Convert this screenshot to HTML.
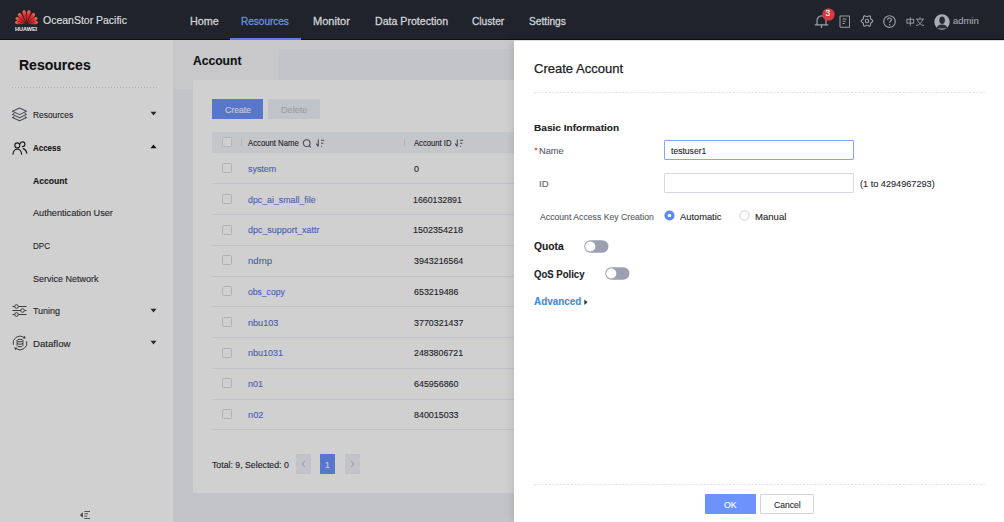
<!DOCTYPE html>
<html><head><meta charset="utf-8">
<style>
*{margin:0;padding:0;box-sizing:border-box}
html,body{width:1004px;height:522px;overflow:hidden;background:#fff;font-family:"Liberation Sans",sans-serif}
.t{position:absolute;white-space:nowrap;transform-origin:0 0;-webkit-text-stroke:0.12px currentColor}
.bl{display:inline-block;width:0;height:0;vertical-align:baseline}
.r{position:absolute;display:block}
#page{position:absolute;left:0;top:0;width:1004px;height:522px}
#mask{position:absolute;left:0;top:40px;width:1004px;height:482px;background:rgba(0,0,0,0.185)}
#drawer{position:absolute;left:514px;top:40px;width:490px;height:482px;background:#fff;box-shadow:-2px 0 8px rgba(0,0,0,0.10)}
#drawer .t,#drawer .r{margin-left:-514px;margin-top:-40px}
</style></head><body>
<div id="page">
<div class="r" style="left:0px;top:40px;width:173px;height:482px;background:#fff"></div>
<div class="r" style="left:173px;top:40px;width:831px;height:482px;background:#f0f1f7"></div>
<div class="r" style="left:173px;top:40px;width:831px;height:9px;background:#f5f5f8"></div>
<div class="r" style="left:173px;top:40px;width:105px;height:49px;background:#f5f5f8"></div>
<div class="r" style="left:193px;top:80px;width:811px;height:413px;background:#fff"></div>
<div class="t" style="left:19.30px;top:58.05px;font-size:14.50px;line-height:14.50px;transform:scaleX(0.9666);letter-spacing:0.000px;color:#141417;font-weight:bold;">Resources</div>
<div class="r" style="left:11.5px;top:87px;width:147px;height:1px;background-image:linear-gradient(to right,#d4d5da 50%,transparent 50%);background-size:3px 1px"></div>
<div class="t" style="left:32.99px;top:110.06px;font-size:9.40px;line-height:9.40px;transform:scaleX(0.8942);letter-spacing:0.000px;color:#2e2e32;">Resources</div>
<div class="t" style="left:33.11px;top:143.05px;font-size:9.40px;line-height:9.40px;transform:scaleX(0.8480);letter-spacing:0.000px;color:#1d1d21;font-weight:bold;">Access</div>
<div class="t" style="left:33.09px;top:176.05px;font-size:9.40px;line-height:9.40px;transform:scaleX(0.9127);letter-spacing:0.000px;color:#1d1d21;font-weight:bold;">Account</div>
<div class="t" style="left:33.31px;top:208.06px;font-size:9.40px;line-height:9.40px;transform:scaleX(0.9761);letter-spacing:0.000px;color:#2e2e32;">Authentication User</div>
<div class="t" style="left:33.12px;top:241.06px;font-size:9.40px;line-height:9.40px;transform:scaleX(0.8600);letter-spacing:0.000px;color:#2e2e32;">DPC</div>
<div class="t" style="left:33.39px;top:274.06px;font-size:9.40px;line-height:9.40px;transform:scaleX(0.9580);letter-spacing:0.000px;color:#2e2e32;">Service Network</div>
<div class="t" style="left:33.12px;top:306.05px;font-size:9.40px;line-height:9.40px;transform:scaleX(0.9505);letter-spacing:0.000px;color:#2e2e32;">Tuning</div>
<div class="t" style="left:32.56px;top:339.05px;font-size:9.40px;line-height:9.40px;transform:scaleX(1.0265);letter-spacing:0.000px;color:#2e2e32;">Dataflow</div>
<svg class="r" style="left:149.5px;top:111.4px" width="7" height="5" viewBox="0 0 7 5"><path d="M0.5 0.8 L3.5 4.4 L6.5 0.8Z" fill="#333"/></svg>
<svg class="r" style="left:149.5px;top:144.1px" width="7" height="5" viewBox="0 0 7 5"><path d="M0.5 4.2 L3.5 0.6 L6.5 4.2Z" fill="#111"/></svg>
<svg class="r" style="left:149.5px;top:307.59999999999997px" width="7" height="5" viewBox="0 0 7 5"><path d="M0.5 0.8 L3.5 4.4 L6.5 0.8Z" fill="#333"/></svg>
<svg class="r" style="left:149.5px;top:340.3px" width="7" height="5" viewBox="0 0 7 5"><path d="M0.5 0.8 L3.5 4.4 L6.5 0.8Z" fill="#333"/></svg>
<svg class="r" style="left:12px;top:107px" width="16" height="15" viewBox="0 0 16 15"><g fill="none" stroke="#595e6b" stroke-width="1.05" stroke-linejoin="round"><path d="M7.5 1 L14.5 4.3 L7.5 7.6 L0.5 4.3Z"/><path d="M2.3 6.5 L0.5 7.4 L7.5 10.7 L14.5 7.4 L12.7 6.5"/><path d="M2.3 9.6 L0.5 10.5 L7.5 13.8 L14.5 10.5 L12.7 9.6"/></g></svg>
<svg class="r" style="left:11.5px;top:140.5px" width="16" height="14" viewBox="0 0 16 14"><g fill="none" stroke="#202024" stroke-width="1.15" stroke-linecap="round"><circle cx="5.3" cy="4.4" r="2.5"/><path d="M8.2 2.6 C8.5 1.5 9.5 0.8 10.5 0.8 C11.9 0.8 12.9 1.9 12.9 3.2 C12.9 4.6 11.9 5.6 10.5 5.6"/><path d="M1 13.2 C1.3 9.7 3.2 8.2 5.3 8.2 C7.4 8.2 9.3 9.7 9.6 13.2"/><path d="M11.2 7.6 C13.2 8.2 14.4 9.8 14.8 12.2"/></g></svg>
<svg class="r" style="left:12px;top:303px" width="15" height="14" viewBox="0 0 15 14"><g fill="none" stroke="#4a4a4e" stroke-width="1"><path d="M0.5 3.5H2.6M6.4 3.5H14.5M0.5 7.5H8.6M12.4 7.5H14.5M0.5 11.5H2.6M6.4 11.5H14.5"/><circle cx="4.5" cy="3.5" r="1.8"/><circle cx="10.5" cy="7.5" r="1.8"/><circle cx="4.5" cy="11.5" r="1.8"/></g></svg>
<svg class="r" style="left:11.5px;top:334.6px" width="16" height="16" viewBox="0 0 16 16"><g fill="none" stroke="#4a4a4e" stroke-width="1"><path d="M1.34 9.79 A6.9 6.9 0 0 1 11.96 2.35 M14.66 6.21 A6.9 6.9 0 0 1 4.04 13.65"/><ellipse cx="8" cy="5.6" rx="2.9" ry="1.3"/><path d="M5.1 5.6V10.6C5.1 12.2 10.9 12.2 10.9 10.6V5.6M5.1 8.1C5.1 9.6 10.9 9.6 10.9 8.1"/></g><path d="M13.76 3.61 L12.63 0.87 L10.79 3.49 Z M2.24 12.39 L3.37 15.13 L5.21 12.51 Z" fill="#4a4a4e"/></svg>
<svg class="r" style="left:79px;top:510px" width="12" height="10" viewBox="0 0 12 10"><path d="M0.9 4.9 L3.9 2.2 L3.9 7.7Z" fill="#4f5360"/><path d="M5.3 1.5H11M5.3 3.8H9M5.3 6.2H8.2M5.3 8.5H11" stroke="#4f5360" stroke-width="0.9"/></svg>
<div class="t" style="left:192.70px;top:55.06px;font-size:12.60px;line-height:12.60px;transform:scaleX(0.9612);letter-spacing:0.000px;color:#141417;font-weight:bold;">Account</div>
<div class="r" style="left:212px;top:99px;width:51px;height:20px;background:#6c92fb"></div>
<div class="t" style="left:224.67px;top:106.06px;font-size:9.20px;line-height:9.20px;transform:scaleX(0.9431);letter-spacing:0.000px;color:#f4f7ff;">Create</div>
<div class="r" style="left:268px;top:99px;width:52px;height:20px;background:#eceff7"></div>
<div class="t" style="left:281.13px;top:106.06px;font-size:9.20px;line-height:9.20px;transform:scaleX(0.9902);letter-spacing:0.000px;color:#c2c5cc;">Delete</div>
<div class="r" style="left:212px;top:132px;width:302px;height:21px;background:#f1f3f8"></div>
<div class="r" style="left:222px;top:137px;width:10px;height:10px;background:#fff;border:1px solid #dcdde0;border-radius:1.5px"></div>
<div class="r" style="left:241px;top:139px;width:1px;height:7px;background:#dcdee5"></div>
<div class="t" style="left:248.12px;top:139.05px;font-size:8.40px;line-height:8.40px;transform:scaleX(0.9244);letter-spacing:0.000px;color:#2a2a30;">Account Name</div>
<svg class="r" style="left:302px;top:139px" width="10" height="10" viewBox="0 0 10 10"><g fill="none" stroke="#5a5e6a" stroke-width="1.05"><circle cx="4.7" cy="4.1" r="3.4"/><path d="M7.2 6.6 L9 8.5"/></g></svg>
<svg class="r" style="left:314.5px;top:139px" width="10" height="9" viewBox="0 0 10 9"><g fill="none" stroke="#5a5e6a" stroke-width="1.1"><path d="M3.3 0.5V7.6M1.2 4.6L3.3 7.4"/><path d="M6 1.2H9.2M6 4.3H8.4M6 7.3H7.1"/></g></svg>
<div class="r" style="left:404px;top:139px;width:1px;height:7px;background:#dcdee5"></div>
<div class="t" style="left:413.92px;top:139.05px;font-size:8.40px;line-height:8.40px;transform:scaleX(0.9154);letter-spacing:0.000px;color:#2a2a30;">Account ID</div>
<svg class="r" style="left:453.6px;top:139px" width="10" height="9" viewBox="0 0 10 9"><g fill="none" stroke="#5a5e6a" stroke-width="1.1"><path d="M3.3 0.5V7.6M1.2 4.6L3.3 7.4"/><path d="M6 1.2H9.2M6 4.3H8.4M6 7.3H7.1"/></g></svg>
<div class="r" style="left:222px;top:163.0px;width:10px;height:10px;background:#fff;border:1px solid #d9dadd;border-radius:1.5px"></div>
<div class="t" style="left:248.26px;top:164.06px;font-size:9.70px;line-height:9.70px;transform:scaleX(0.9190);letter-spacing:0.000px;color:#5675dc;">system</div>
<div class="t" style="left:413.97px;top:164.06px;font-size:9.70px;line-height:9.70px;transform:scaleX(0.9186);letter-spacing:0.000px;color:#2a2a30;">0</div>
<div class="r" style="left:212px;top:183.4px;width:302px;height:1px;background:#eceef4"></div>
<div class="r" style="left:222px;top:193.8px;width:10px;height:10px;background:#fff;border:1px solid #d9dadd;border-radius:1.5px"></div>
<div class="t" style="left:248.14px;top:195.06px;font-size:9.70px;line-height:9.70px;transform:scaleX(0.9091);letter-spacing:0.000px;color:#5675dc;">dpc_ai_small_file</div>
<div class="t" style="left:413.30px;top:195.06px;font-size:9.70px;line-height:9.70px;transform:scaleX(0.9068);letter-spacing:0.000px;color:#2a2a30;">1660132891</div>
<div class="r" style="left:212px;top:214.2px;width:302px;height:1px;background:#eceef4"></div>
<div class="r" style="left:222px;top:224.5px;width:10px;height:10px;background:#fff;border:1px solid #d9dadd;border-radius:1.5px"></div>
<div class="t" style="left:248.14px;top:225.06px;font-size:9.70px;line-height:9.70px;transform:scaleX(0.9216);letter-spacing:0.000px;color:#5675dc;">dpc_support_xattr</div>
<div class="t" style="left:413.28px;top:225.06px;font-size:9.70px;line-height:9.70px;transform:scaleX(0.9261);letter-spacing:0.000px;color:#2a2a30;">1502354218</div>
<div class="r" style="left:212px;top:244.9px;width:302px;height:1px;background:#eceef4"></div>
<div class="r" style="left:222px;top:255.2px;width:10px;height:10px;background:#fff;border:1px solid #d9dadd;border-radius:1.5px"></div>
<div class="t" style="left:247.96px;top:256.06px;font-size:9.70px;line-height:9.70px;transform:scaleX(0.9890);letter-spacing:0.000px;color:#5675dc;">ndmp</div>
<div class="t" style="left:413.97px;top:256.06px;font-size:9.70px;line-height:9.70px;transform:scaleX(0.9147);letter-spacing:0.000px;color:#2a2a30;">3943216564</div>
<div class="r" style="left:212px;top:275.6px;width:302px;height:1px;background:#eceef4"></div>
<div class="r" style="left:222px;top:286.0px;width:10px;height:10px;background:#fff;border:1px solid #d9dadd;border-radius:1.5px"></div>
<div class="t" style="left:248.15px;top:287.06px;font-size:9.70px;line-height:9.70px;transform:scaleX(0.8863);letter-spacing:0.000px;color:#5675dc;">obs_copy</div>
<div class="t" style="left:413.86px;top:287.06px;font-size:9.70px;line-height:9.70px;transform:scaleX(0.9172);letter-spacing:0.000px;color:#2a2a30;">653219486</div>
<div class="r" style="left:212px;top:306.4px;width:302px;height:1px;background:#eceef4"></div>
<div class="r" style="left:222px;top:316.8px;width:10px;height:10px;background:#fff;border:1px solid #d9dadd;border-radius:1.5px"></div>
<div class="t" style="left:248.40px;top:318.06px;font-size:9.70px;line-height:9.70px;transform:scaleX(0.9390);letter-spacing:0.000px;color:#5675dc;">nbu103</div>
<div class="t" style="left:413.97px;top:318.06px;font-size:9.70px;line-height:9.70px;transform:scaleX(0.9166);letter-spacing:0.000px;color:#2a2a30;">3770321437</div>
<div class="r" style="left:212px;top:337.1px;width:302px;height:1px;background:#eceef4"></div>
<div class="r" style="left:222px;top:347.5px;width:10px;height:10px;background:#fff;border:1px solid #d9dadd;border-radius:1.5px"></div>
<div class="t" style="left:248.41px;top:348.06px;font-size:9.70px;line-height:9.70px;transform:scaleX(0.9266);letter-spacing:0.000px;color:#5675dc;">nbu1031</div>
<div class="t" style="left:413.86px;top:348.06px;font-size:9.70px;line-height:9.70px;transform:scaleX(0.9104);letter-spacing:0.000px;color:#2a2a30;">2483806721</div>
<div class="r" style="left:212px;top:367.9px;width:302px;height:1px;background:#eceef4"></div>
<div class="r" style="left:222px;top:378.2px;width:10px;height:10px;background:#fff;border:1px solid #d9dadd;border-radius:1.5px"></div>
<div class="t" style="left:248.35px;top:379.06px;font-size:9.70px;line-height:9.70px;transform:scaleX(0.9308);letter-spacing:0.000px;color:#5675dc;">n01</div>
<div class="t" style="left:413.86px;top:379.06px;font-size:9.70px;line-height:9.70px;transform:scaleX(0.9174);letter-spacing:0.000px;color:#2a2a30;">645956860</div>
<div class="r" style="left:212px;top:398.6px;width:302px;height:1px;background:#eceef4"></div>
<div class="r" style="left:222px;top:409.0px;width:10px;height:10px;background:#fff;border:1px solid #d9dadd;border-radius:1.5px"></div>
<div class="t" style="left:248.34px;top:410.06px;font-size:9.70px;line-height:9.70px;transform:scaleX(0.9540);letter-spacing:0.000px;color:#5675dc;">n02</div>
<div class="t" style="left:413.92px;top:410.06px;font-size:9.70px;line-height:9.70px;transform:scaleX(0.9192);letter-spacing:0.000px;color:#2a2a30;">840015033</div>
<div class="r" style="left:212px;top:429.4px;width:302px;height:1px;background:#eceef4"></div>
<div class="t" style="left:212.22px;top:461.06px;font-size:9.30px;line-height:9.30px;transform:scaleX(0.9403);letter-spacing:0.000px;color:#2a2a30;">Total: 9, Selected: 0</div>
<div class="r" style="left:296px;top:454px;width:15px;height:20px;background:#eef0f6"></div>
<svg class="r" style="left:301px;top:460px" width="5" height="8" viewBox="0 0 5 8"><path d="M4 0.8L1 4L4 7.2" fill="none" stroke="#b9bcc4" stroke-width="1"/></svg>
<div class="r" style="left:320px;top:454px;width:15px;height:20px;background:#6c92fb"></div>
<div class="t" style="left:324.53px;top:461.06px;font-size:9.30px;line-height:9.30px;transform:scaleX(0.9253);letter-spacing:0.000px;color:#fff;">1</div>
<div class="r" style="left:345px;top:454px;width:15px;height:20px;background:#eef0f6"></div>
<svg class="r" style="left:350px;top:460px" width="5" height="8" viewBox="0 0 5 8"><path d="M1 0.8L4 4L1 7.2" fill="none" stroke="#b9bcc4" stroke-width="1"/></svg>
</div>
<div id="mask"></div>
<div class="r" style="left:0px;top:0px;width:1004px;height:40px;background:#20232b"></div>
<div class="r" style="left:0px;top:39px;width:1004px;height:1px;background:#0e0f13"></div>
<svg class="r" style="left:14px;top:7px" width="25" height="18" viewBox="0 0 25 18"><defs><linearGradient id="pg" x1="0" y1="1" x2="0" y2="0"><stop offset="0" stop-color="#c8151c"/><stop offset="0.6" stop-color="#d92a2a"/><stop offset="1" stop-color="#e8745e"/></linearGradient></defs><g fill="url(#pg)"><path transform="translate(12.5 17.3) rotate(-11) translate(0 -1.3)" d="M0 0 C-0.53 -4.55 -1.75 -7.15 -1.75 -10.40 C-1.75 -12.61 -0.79 -13.00 0 -13.00 C0.79 -13.00 1.75 -12.61 1.75 -10.40 C1.75 -7.15 0.53 -4.55 0 0Z"/><path transform="translate(12.5 17.3) rotate(11) translate(0 -1.3)" d="M0 0 C-0.53 -4.55 -1.75 -7.15 -1.75 -10.40 C-1.75 -12.61 -0.79 -13.00 0 -13.00 C0.79 -13.00 1.75 -12.61 1.75 -10.40 C1.75 -7.15 0.53 -4.55 0 0Z"/><path transform="translate(12.5 17.3) rotate(-36) translate(0 -1.3)" d="M0 0 C-0.53 -4.27 -1.75 -6.71 -1.75 -9.76 C-1.75 -11.83 -0.79 -12.20 0 -12.20 C0.79 -12.20 1.75 -11.83 1.75 -9.76 C1.75 -6.71 0.53 -4.27 0 0Z"/><path transform="translate(12.5 17.3) rotate(36) translate(0 -1.3)" d="M0 0 C-0.53 -4.27 -1.75 -6.71 -1.75 -9.76 C-1.75 -11.83 -0.79 -12.20 0 -12.20 C0.79 -12.20 1.75 -11.83 1.75 -9.76 C1.75 -6.71 0.53 -4.27 0 0Z"/><path transform="translate(12.5 17.3) rotate(-59) translate(0 -1.3)" d="M0 0 C-0.49 -3.92 -1.65 -6.16 -1.65 -8.96 C-1.65 -10.86 -0.74 -11.20 0 -11.20 C0.74 -11.20 1.65 -10.86 1.65 -8.96 C1.65 -6.16 0.49 -3.92 0 0Z"/><path transform="translate(12.5 17.3) rotate(59) translate(0 -1.3)" d="M0 0 C-0.49 -3.92 -1.65 -6.16 -1.65 -8.96 C-1.65 -10.86 -0.74 -11.20 0 -11.20 C0.74 -11.20 1.65 -10.86 1.65 -8.96 C1.65 -6.16 0.49 -3.92 0 0Z"/><path transform="translate(12.5 17.3) rotate(-80) translate(0 -1.3)" d="M0 0 C-0.46 -3.57 -1.55 -5.61 -1.55 -8.16 C-1.55 -9.89 -0.70 -10.20 0 -10.20 C0.70 -10.20 1.55 -9.89 1.55 -8.16 C1.55 -5.61 0.46 -3.57 0 0Z"/><path transform="translate(12.5 17.3) rotate(80) translate(0 -1.3)" d="M0 0 C-0.46 -3.57 -1.55 -5.61 -1.55 -8.16 C-1.55 -9.89 -0.70 -10.20 0 -10.20 C0.70 -10.20 1.55 -9.89 1.55 -8.16 C1.55 -5.61 0.46 -3.57 0 0Z"/></g></svg>
<div class="t" style="left:15.06px;top:27.05px;font-size:5.00px;line-height:5.00px;transform:scaleX(1.1080);letter-spacing:0.000px;color:#dcdcde;font-weight:bold;">HUAWEI</div>
<div class="t" style="left:42.71px;top:15.05px;font-size:10.90px;line-height:10.90px;transform:scaleX(0.9627);letter-spacing:0.000px;color:#d8dadf;-webkit-text-stroke:0.2px currentColor;">OceanStor Pacific</div>
<div class="t" style="left:189.59px;top:16.05px;font-size:10.80px;line-height:10.80px;transform:scaleX(1.0007);letter-spacing:0.000px;color:#cfd2d8;-webkit-text-stroke:0.3px currentColor;">Home</div>
<div class="t" style="left:241.44px;top:16.05px;font-size:10.80px;line-height:10.80px;transform:scaleX(0.9274);letter-spacing:0.000px;color:#6d8fe6;-webkit-text-stroke:0.3px currentColor;">Resources</div>
<div class="t" style="left:312.62px;top:16.05px;font-size:10.80px;line-height:10.80px;transform:scaleX(1.0247);letter-spacing:0.000px;color:#cfd2d8;-webkit-text-stroke:0.3px currentColor;">Monitor</div>
<div class="t" style="left:374.82px;top:16.05px;font-size:10.80px;line-height:10.80px;transform:scaleX(0.9813);letter-spacing:0.000px;color:#cfd2d8;-webkit-text-stroke:0.3px currentColor;">Data Protection</div>
<div class="t" style="left:471.89px;top:16.05px;font-size:10.80px;line-height:10.80px;transform:scaleX(0.9422);letter-spacing:0.000px;color:#cfd2d8;-webkit-text-stroke:0.3px currentColor;">Cluster</div>
<div class="t" style="left:528.94px;top:16.05px;font-size:10.80px;line-height:10.80px;transform:scaleX(0.9444);letter-spacing:0.000px;color:#cfd2d8;-webkit-text-stroke:0.3px currentColor;">Settings</div>
<div class="r" style="left:230px;top:38px;width:70.5px;height:2px;background:#5c82e0"></div>
<svg class="r" style="left:814px;top:14px" width="16" height="15" viewBox="0 0 16 15"><g fill="none" stroke="#9a9ea7" stroke-width="1.2" stroke-linecap="round"><path d="M3 10.8 V6.8 C3 4 5 1.8 7.5 1.8 C10 1.8 12 4 12 6.8 V10.8"/><path d="M1.2 10.8H13.8"/><path d="M7.5 11V13.5"/></g></svg>
<svg class="r" style="left:821.5px;top:8px" width="13" height="13" viewBox="0 0 13 13"><circle cx="6.5" cy="6.5" r="6.2" fill="#d63a3c"/></svg>
<div class="t" style="left:825.4px;top:8.9px;font-size:8.4px;line-height:9px;color:#fff">3</div>
<svg class="r" style="left:838.5px;top:15px" width="11.5" height="13" viewBox="0 0 11.5 13"><g fill="none" stroke="#9a9ea7" stroke-width="1.05"><rect x="1" y="0.9" width="9.6" height="11.3" rx="0.6"/><path d="M3.6 4H7.4M3.6 6.2H6.6M3.6 8.4H5.8"/></g></svg>
<svg class="r" style="left:859.8px;top:14.2px" width="14" height="14" viewBox="0 0 14 14"><g fill="none" stroke="#9a9ea7" stroke-width="1.1"><path d="M12.75 7.00 L12.68 7.37 L12.48 7.72 L12.19 8.03 L11.83 8.29 L11.46 8.51 L11.13 8.71 L10.86 8.90 L10.68 9.12 L10.58 9.39 L10.55 9.72 L10.54 10.11 L10.54 10.54 L10.49 10.97 L10.37 11.39 L10.16 11.73 L9.88 11.98 L9.52 12.11 L9.12 12.11 L8.70 12.01 L8.29 11.83 L7.92 11.62 L7.58 11.43 L7.28 11.30 L7.00 11.25 L6.72 11.30 L6.42 11.43 L6.08 11.62 L5.71 11.83 L5.30 12.01 L4.88 12.11 L4.48 12.11 L4.13 11.98 L3.84 11.73 L3.63 11.39 L3.51 10.97 L3.46 10.54 L3.46 10.11 L3.45 9.72 L3.42 9.39 L3.32 9.12 L3.14 8.90 L2.87 8.71 L2.54 8.51 L2.17 8.29 L1.81 8.03 L1.52 7.72 L1.32 7.37 L1.25 7.00 L1.32 6.63 L1.52 6.28 L1.81 5.97 L2.17 5.71 L2.54 5.49 L2.87 5.29 L3.14 5.10 L3.32 4.88 L3.42 4.61 L3.45 4.28 L3.46 3.89 L3.46 3.46 L3.51 3.03 L3.63 2.61 L3.84 2.27 L4.12 2.02 L4.48 1.89 L4.88 1.89 L5.30 1.99 L5.71 2.17 L6.08 2.38 L6.42 2.57 L6.72 2.70 L7.00 2.75 L7.28 2.70 L7.58 2.57 L7.92 2.38 L8.29 2.17 L8.70 1.99 L9.12 1.89 L9.52 1.89 L9.88 2.02 L10.16 2.27 L10.37 2.61 L10.49 3.03 L10.54 3.46 L10.54 3.89 L10.55 4.28 L10.58 4.61 L10.68 4.87 L10.86 5.10 L11.13 5.29 L11.46 5.49 L11.83 5.71 L12.19 5.97 L12.48 6.28 L12.68 6.63Z" stroke-linejoin="round"/><circle cx="7" cy="7" r="1.7"/></g></svg>
<svg class="r" style="left:883px;top:15px" width="13" height="13" viewBox="0 0 13 13"><g fill="none" stroke="#9a9ea7" stroke-width="1.15"><circle cx="6.5" cy="6.5" r="5.8"/><path d="M4.6 5 C4.6 3.7 5.5 3 6.5 3 C7.6 3 8.4 3.8 8.4 4.8 C8.4 6.2 6.6 6.3 6.6 7.8"/></g><circle cx="6.6" cy="9.8" r="0.75" fill="#9a9ea7"/></svg>
<svg class="r" style="left:906px;top:17px" width="18.5" height="9" viewBox="0 0 18.5 9"><g fill="none" stroke="#9a9ea7" stroke-width="0.95"><rect x="0.9" y="2.3" width="6.8" height="3.8"/><path d="M4.3 0.3V8.8"/><path d="M14 0.2V1.8M10 2.1H18M11.3 2.3C12.2 5.5 14.3 7.8 18 8.7M16.7 2.3C15.8 5.5 13.7 7.8 10 8.7"/></g></svg>
<svg class="r" style="left:933.5px;top:13.5px" width="16" height="16" viewBox="0 0 16 16"><defs><clipPath id="cav"><circle cx="8" cy="8" r="7.7"/></clipPath></defs><circle cx="8" cy="8" r="7.7" fill="#a9adb6"/><g clip-path="url(#cav)" fill="#2a2d35"><ellipse cx="8.1" cy="6.3" rx="2.8" ry="3.8"/><path d="M2.5 14.5 C3 11.6 5 10.4 8 10.4 C11 10.4 13 11.6 13.5 14.5Z"/></g></svg>
<div class="t" style="left:952.70px;top:16.05px;font-size:9.50px;line-height:9.50px;transform:scaleX(0.9932);letter-spacing:0.000px;color:#a3a7b0;">admin</div>
<div id="drawer">
<div class="r" style="left:514px;top:40px;width:490px;height:1px;background:#dedee0"></div>
<div class="t" style="left:534.34px;top:63.06px;font-size:12.60px;line-height:12.60px;transform:scaleX(1.0346);letter-spacing:0.000px;color:#222226;-webkit-text-stroke:0.25px currentColor;">Create Account</div>
<div class="r" style="left:534px;top:92px;width:451px;height:1px;background-image:linear-gradient(to right,#dcdde4 50%,transparent 50%);background-size:3.7px 1px"></div>
<div class="t" style="left:533.91px;top:123.05px;font-size:9.70px;line-height:9.70px;transform:scaleX(1.0405);letter-spacing:0.000px;color:#222226;font-weight:bold;">Basic Information</div>
<svg class="r" style="left:533.8px;top:147px" width="4" height="4" viewBox="0 0 4 4"><path d="M2 0.2 L2.5 1.4 L3.8 1.4 L2.8 2.2 L3.2 3.6 L2 2.8 L0.8 3.6 L1.2 2.2 L0.2 1.4 L1.5 1.4Z" fill="#e53935"/></svg>
<div class="t" style="left:539.45px;top:147.06px;font-size:9.00px;line-height:9.00px;transform:scaleX(1.0300);letter-spacing:0.000px;color:#5a5d64;">Name</div>
<div class="r" style="left:664px;top:140px;width:189.5px;height:20px;background:#fff;border:1px solid #85a5f8;border-radius:1px"></div>
<div class="t" style="left:671.19px;top:147.05px;font-size:9.00px;line-height:9.00px;transform:scaleX(0.9527);letter-spacing:0.000px;color:#1f1f23;">testuser1</div>
<div class="t" style="left:539.14px;top:180.06px;font-size:9.00px;line-height:9.00px;transform:scaleX(1.0591);letter-spacing:0.000px;color:#5a5d64;">ID</div>
<div class="r" style="left:664px;top:173px;width:189.5px;height:20px;background:#fff;border:1px solid #d7d9df;border-radius:1px"></div>
<div class="t" style="left:859.63px;top:180.06px;font-size:9.20px;line-height:9.20px;transform:scaleX(0.9949);letter-spacing:0.000px;color:#2a2a30;">(1 to 4294967293)</div>
<div class="t" style="left:540.01px;top:213.05px;font-size:9.10px;line-height:9.10px;transform:scaleX(0.9545);letter-spacing:0.000px;color:#5a5d64;">Account Access Key Creation</div>
<svg class="r" style="left:663.8px;top:210.2px" width="11" height="11" viewBox="0 0 11 11"><circle cx="5.5" cy="5.5" r="5.1" fill="#5a88f7"/><circle cx="5.5" cy="5.5" r="1.8" fill="#fff"/></svg>
<div class="t" style="left:679.91px;top:213.06px;font-size:9.20px;line-height:9.20px;transform:scaleX(1.0138);letter-spacing:0.000px;color:#2a2a30;">Automatic</div>
<svg class="r" style="left:739px;top:210.2px" width="11" height="11" viewBox="0 0 11 11"><circle cx="5.5" cy="5.5" r="4.7" fill="#fff" stroke="#cdd0d6" stroke-width="1"/></svg>
<div class="t" style="left:754.74px;top:213.06px;font-size:9.20px;line-height:9.20px;transform:scaleX(1.0407);letter-spacing:0.000px;color:#2a2a30;">Manual</div>
<div class="t" style="left:534.18px;top:242.06px;font-size:10.20px;line-height:10.20px;transform:scaleX(1.0092);letter-spacing:0.000px;color:#222226;font-weight:bold;">Quota</div>
<svg class="r" style="left:584px;top:239.5px" width="25" height="13" viewBox="0 0 25 13"><rect x="0.3" y="0.3" width="24.2" height="12.4" rx="6.2" fill="#9ca1b2"/><circle cx="6.3" cy="6.5" r="5.1" fill="#fff"/></svg>
<div class="t" style="left:534.22px;top:270.06px;font-size:10.20px;line-height:10.20px;transform:scaleX(0.9383);letter-spacing:0.000px;color:#222226;font-weight:bold;">QoS Policy</div>
<svg class="r" style="left:604.8px;top:267.2px" width="25" height="13" viewBox="0 0 25 13"><rect x="0.3" y="0.3" width="24.2" height="12.4" rx="6.2" fill="#9ca1b2"/><circle cx="6.3" cy="6.5" r="5.1" fill="#fff"/></svg>
<div class="t" style="left:534.36px;top:297.06px;font-size:10.20px;line-height:10.20px;transform:scaleX(0.9689);letter-spacing:0.000px;color:#3a8ee6;font-weight:bold;">Advanced</div>
<svg class="r" style="left:584px;top:299px" width="4" height="7" viewBox="0 0 4 7"><path d="M0.3 0.5L3.6 3.3L0.3 6.1Z" fill="#333"/></svg>
<div class="r" style="left:534px;top:483.5px;width:451px;height:1px;background-image:linear-gradient(to right,#dcdde4 50%,transparent 50%);background-size:3.7px 1px"></div>
<div class="r" style="left:705px;top:494px;width:50.5px;height:20px;background:#6c92fb;border-radius:1px"></div>
<div class="t" style="left:724.00px;top:501.05px;font-size:9.10px;line-height:9.10px;transform:scaleX(0.9581);letter-spacing:0.000px;color:#fff;">OK</div>
<div class="r" style="left:760px;top:494px;width:53.5px;height:20px;background:#fff;border:1px solid #d3d5dc;border-radius:1px"></div>
<div class="t" style="left:773.67px;top:501.05px;font-size:9.30px;line-height:9.30px;transform:scaleX(0.9230);letter-spacing:0.000px;color:#2a2a30;">Cancel</div>
</div>
</body></html>
